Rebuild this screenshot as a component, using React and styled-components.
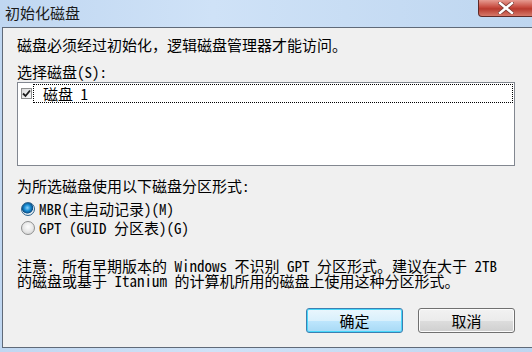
import React, { useState } from "react";
import styled, { createGlobalStyle } from "styled-components";

const GlobalStyle = createGlobalStyle`
  html, body {
    margin: 0;
    padding: 0;
    background: #b9d1ea;
  }
  body {
    font-family: "Noto Sans Mono CJK SC", "Noto Sans CJK SC", sans-serif;
    font-size: 15px;
    color: #000;
  }
`;

const Frame = styled.div`
  width: 532px;
  height: 352px;
  box-sizing: border-box;
  display: flex;
  flex-direction: column;
  background: linear-gradient(to right, #c0d7f1, #cfe2f7 40%, #bed6f0);
  padding: 0 0 4px 2px;
  overflow: hidden;
`;

const TitleBar = styled.div`
  height: 27px;
  display: flex;
  justify-content: space-between;
  align-items: flex-start;
  margin-left: -2px;
`;

const Title = styled.div`
  font-family: "Noto Sans CJK SC", sans-serif;
  font-size: 15px;
  line-height: 15px;
  padding: 5px 0 0 5px;
  color: #1a1a1a;
`;

const CloseButton = styled.div`
  width: 56px;
  height: 17px;
  box-sizing: border-box;
  margin-right: -2px;
  border: 1px solid #5e2a27;
  border-top: none;
  border-radius: 0 0 0 4px;
  background: linear-gradient(to bottom, #e69b91, #c74b3f 45%, #b83a2e 55%, #d6796a);
  display: flex;
  align-items: center;
  justify-content: center;
  svg {
    display: block;
  }
`;

const Client = styled.div`
  flex: 1;
  background: #f0f0f0;
  border: 1px solid #606a78;
  border-right: none;
  padding: 9px 17px 0 14px;
  display: flex;
  flex-direction: column;
`;

const Line = styled.div`
  line-height: 15px;
  margin-top: ${(p) => p.$gap || 0}px;
  white-space: pre;
`;

const ListBox = styled.div`
  margin-top: 3px;
  height: 84px;
  box-sizing: border-box;
  border: 1px solid #828790;
  background: #fff;
  padding: 0 1px 0 3px;
`;

const ListItem = styled.div`
  display: flex;
  align-items: center;
  height: 20px;
`;

const CheckBox = styled.div`
  width: 11px;
  height: 11px;
  box-sizing: border-box;
  border: 1px solid #8e8f8f;
  background: linear-gradient(135deg, #dcdcdc, #fbfbfb);
  display: flex;
  align-items: center;
  justify-content: center;
  flex-shrink: 0;
`;

const ItemLabel = styled.div`
  flex: 1;
  height: 19px;
  box-sizing: border-box;
  margin-left: 1px;
  border: 1px dotted #000;
  line-height: 17px;
  padding-left: 9px;
  white-space: pre;
`;

const RadioGroup = styled.div`
  margin-top: 6px;
  padding-left: 4px;
  display: flex;
  flex-direction: column;
`;

const RadioRow = styled.div`
  display: flex;
  align-items: center;
  height: 19px;
  line-height: 15px;
  white-space: pre;
`;

const RadioDot = styled.div`
  width: 14px;
  height: 14px;
  box-sizing: border-box;
  border-radius: 50%;
  border: 1px solid ${(p) => (p.$on ? "#2c628b" : "#8e8f8f")};
  background: ${(p) =>
    p.$on
      ? "radial-gradient(circle at 45% 40%, #8fd3fb 0, #1a8fd6 30%, #0a4f87 55%, #e9eef2 62%, #cfd6dc 100%)"
      : "radial-gradient(circle at 50% 40%, #fdfdfd 0, #e8e8e8 50%, #cbcbcb 100%)"};
  margin-right: 4px;
  flex-shrink: 0;
`;

const Note = styled.div`
  margin-top: 21px;
  line-height: 15px;
  white-space: pre;
`;

const Buttons = styled.div`
  margin-top: auto;
  margin-bottom: 14px;
  display: flex;
  justify-content: flex-end;
  gap: 15px;
`;

const Button = styled.button`
  width: 97px;
  height: 25px;
  box-sizing: border-box;
  font-family: inherit;
  font-size: 15px;
  line-height: 15px;
  color: #000;
  border-radius: 3px;
  padding: 0;
  border: 1px solid ${(p) => (p.$primary ? "#3c7fb1" : "#707070")};
  background: ${(p) =>
    p.$primary
      ? "linear-gradient(to bottom, #eaf6fd 0, #d9f0fc 50%, #bee6fd 51%, #a7d9f5 100%)"
      : "linear-gradient(to bottom, #f2f2f2 0, #ebebeb 50%, #dddddd 51%, #cfcfcf 100%)"};
  box-shadow: inset 0 0 0 1px ${(p) => (p.$primary ? "#48d8fb" : "#fcfcfc")};
`;

export default function App() {
  const [scheme, setScheme] = useState("mbr");
  return (
    <>
      <GlobalStyle />
      <Frame>
        <TitleBar>
          <Title>初始化磁盘</Title>
          <CloseButton>
            <svg width="16" height="12" viewBox="0 0 16 12">
              <path
                d="M2 1 L14 11 M14 1 L2 11"
                stroke="#7a3a34"
                strokeWidth="4"
                strokeLinecap="square"
              />
              <path
                d="M2 1 L14 11 M14 1 L2 11"
                stroke="#fff"
                strokeWidth="2.4"
                strokeLinecap="square"
              />
            </svg>
          </CloseButton>
        </TitleBar>
        <Client>
          <Line>磁盘必须经过初始化，逻辑磁盘管理器才能访问。</Line>
          <Line $gap={12}>选择磁盘(S):</Line>
          <ListBox>
            <ListItem>
              <CheckBox>
                <svg width="9" height="9" viewBox="0 0 9 9">
                  <path d="M1 4.5 L3.5 7 L8 1.5" stroke="#1c1c1c" strokeWidth="1.8" fill="none" />
                </svg>
              </CheckBox>
              <ItemLabel>磁盘 1</ItemLabel>
            </ListItem>
          </ListBox>
          <Line $gap={12}>为所选磁盘使用以下磁盘分区形式:</Line>
          <RadioGroup>
            <RadioRow onClick={() => setScheme("mbr")}>
              <RadioDot $on={scheme === "mbr"} />
              MBR(主启动记录)(M)
            </RadioRow>
            <RadioRow onClick={() => setScheme("gpt")}>
              <RadioDot $on={scheme === "gpt"} />
              GPT (GUID 分区表)(G)
            </RadioRow>
          </RadioGroup>
          <Note>
            {"注意: 所有早期版本的 Windows 不识别 GPT 分区形式。建议在大于 2TB\n的磁盘或基于 Itanium 的计算机所用的磁盘上使用这种分区形式。"}
          </Note>
          <Buttons>
            <Button $primary>确定</Button>
            <Button>取消</Button>
          </Buttons>
        </Client>
      </Frame>
    </>
  );
}
